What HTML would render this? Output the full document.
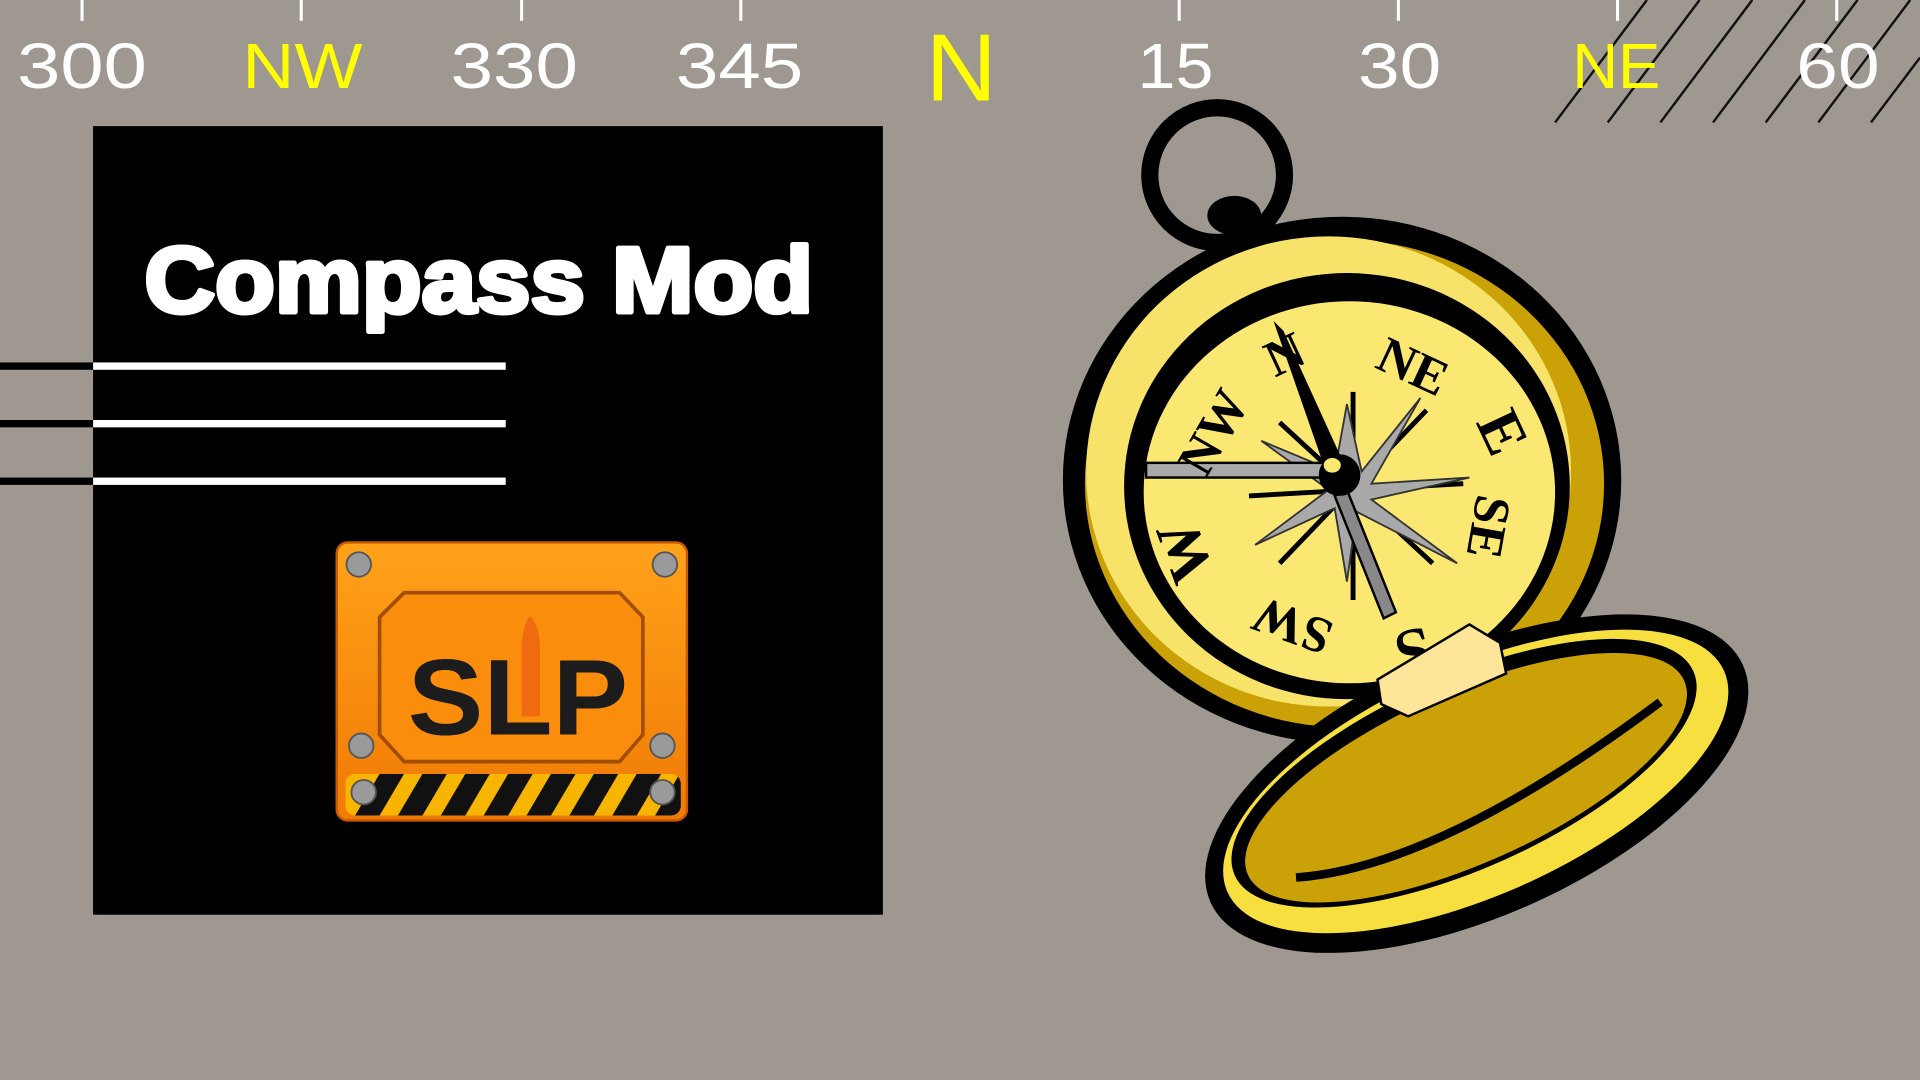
<!DOCTYPE html>
<html><head><meta charset="utf-8"><style>
html,body{margin:0;padding:0;width:1920px;height:1080px;overflow:hidden;background:#9f9891}
svg{display:block}
</style></head><body>
<svg width="1920" height="1080" viewBox="0 0 1568 882" preserveAspectRatio="none" xmlns="http://www.w3.org/2000/svg">
<rect width="1568" height="882" fill="#9f9891"/>
<g stroke="#111" stroke-width="2">
<line x1="1270" y1="100" x2="1345" y2="0"/><line x1="1313" y1="100" x2="1388" y2="0"/>
<line x1="1356" y1="100" x2="1431" y2="0"/><line x1="1399" y1="100" x2="1474" y2="0"/>
<line x1="1442" y1="100" x2="1517" y2="0"/><line x1="1485" y1="100" x2="1560" y2="0"/>
<line x1="1528" y1="100" x2="1568" y2="47"/>
</g>
<g stroke="#fff" stroke-width="2.5">
<line x1="67" y1="0" x2="67" y2="17"/><line x1="246" y1="0" x2="246" y2="17"/>
<line x1="426" y1="0" x2="426" y2="17"/><line x1="605" y1="0" x2="605" y2="17"/>
<line x1="963" y1="0" x2="963" y2="17"/><line x1="1142" y1="0" x2="1142" y2="17"/>
<line x1="1321" y1="0" x2="1321" y2="17"/><line x1="1500" y1="0" x2="1500" y2="17"/>
</g>
<g font-family="Liberation Sans Narrow, Liberation Sans, sans-serif" font-size="52" text-anchor="middle" fill="#fff">
<text x="67" y="72" textLength="106" lengthAdjust="spacingAndGlyphs">300</text>
<text x="247" y="72" fill="#ffff00" textLength="98" lengthAdjust="spacingAndGlyphs">NW</text>
<text x="420" y="72" textLength="104" lengthAdjust="spacingAndGlyphs">330</text>
<text x="604" y="72" textLength="104" lengthAdjust="spacingAndGlyphs">345</text>
<text x="785" y="82" fill="#ffff00" font-size="78" textLength="58" lengthAdjust="spacingAndGlyphs">N</text>
<text x="960" y="72" textLength="62" lengthAdjust="spacingAndGlyphs">15</text>
<text x="1143" y="72" textLength="68" lengthAdjust="spacingAndGlyphs">30</text>
<text x="1320" y="72" fill="#ffff00" textLength="72" lengthAdjust="spacingAndGlyphs">NE</text>
<text x="1501" y="72" textLength="68" lengthAdjust="spacingAndGlyphs">60</text>
</g>
<rect x="76" y="103" width="645" height="644" fill="#000"/>
<text x="391" y="255" font-family="Liberation Sans, sans-serif" font-weight="bold" font-size="76" fill="#fff" text-anchor="middle" textLength="546" lengthAdjust="spacingAndGlyphs" stroke="#fff" stroke-width="4" stroke-linejoin="round">Compass Mod</text>
<g fill="#fff"><rect x="76" y="296" width="337" height="6"/><rect x="76" y="343" width="337" height="6"/><rect x="76" y="390" width="337" height="6"/></g>
<g fill="#000"><rect x="0" y="296" width="76" height="6"/><rect x="0" y="343" width="76" height="6"/><rect x="0" y="390" width="76" height="6"/></g>
<defs>
<linearGradient id="pl" x1="0" y1="0" x2="0" y2="1"><stop offset="0" stop-color="#ffa21a"/><stop offset="1" stop-color="#f07a05"/></linearGradient>
<clipPath id="bar"><rect x="282" y="632" width="274" height="34" rx="8"/></clipPath>
</defs>
<rect x="275" y="443" width="286" height="227" rx="9" fill="url(#pl)" stroke="#c95a00" stroke-width="2"/>
<polygon points="330,484 506,484 525,504 525,600 506,622 330,622 310,600 310,504" fill="#fb8d0d" stroke="#a24d00" stroke-width="3"/>
<g clip-path="url(#bar)"><rect x="282" y="632" width="274" height="34" fill="#f7b500"/>
<g fill="#111"><polygon points="290,666 310,632 330,632 310,666"/><polygon points="325,666 345,632 365,632 345,666"/><polygon points="360,666 380,632 400,632 380,666"/><polygon points="395,666 415,632 435,632 415,666"/><polygon points="430,666 450,632 470,632 450,666"/><polygon points="465,666 485,632 505,632 485,666"/><polygon points="500,666 520,632 540,632 520,666"/><polygon points="535,666 555,632 575,632 555,666"/></g></g>
<text x="423" y="600" font-family="Liberation Sans, sans-serif" font-weight="bold" font-size="88" fill="#1c1c1c" text-anchor="middle" textLength="180" lengthAdjust="spacingAndGlyphs">SLP</text>
<path d="M433 503 Q441 512 441 530 L441 585 L426 585 L426 530 Q426 512 433 503Z" fill="#f06a10"/>
<g fill="#9a9a9a" stroke="#555" stroke-width="1.5"><circle cx="293" cy="461" r="10"/><circle cx="543" cy="461" r="10"/><circle cx="295" cy="609" r="10"/><circle cx="541" cy="609" r="10"/><circle cx="297" cy="647" r="10"/><circle cx="541" cy="647" r="10"/></g>
<g>
<circle cx="994" cy="143" r="55" fill="none" stroke="#000" stroke-width="14"/>
<ellipse cx="1008" cy="176" rx="22" ry="16" fill="#000"/>
<ellipse cx="1096" cy="392" rx="228" ry="215" fill="#000"/>
<ellipse cx="1098" cy="395" rx="212" ry="199" fill="#caa208"/>
<ellipse cx="1085" cy="385" rx="198" ry="192" fill="#f7e36a"/>
<ellipse cx="1100" cy="397" rx="182" ry="174" fill="#000"/>
<ellipse cx="1102" cy="402" rx="168" ry="156" fill="#fbe873"/>
<g stroke="#000" stroke-width="4">
<line x1="1105" y1="320" x2="1105" y2="490"/><line x1="1020" y1="405" x2="1195" y2="395"/>
<line x1="1045" y1="345" x2="1170" y2="460"/><line x1="1165" y1="335" x2="1045" y2="460"/>
</g>
<polygon points="1100,330 1112,385 1160,325 1120,395 1200,390 1120,408 1190,460 1108,418 1100,475 1090,415 1025,445 1085,400 1030,360 1090,385" fill="#a9a9a9" stroke="#333" stroke-width="1.5"/>
<polygon points="1100,400 1140,500 1130,505 1090,405" fill="#888" stroke="#000" stroke-width="2"/>
<polygon points="1040,262 1048,270 1105,395 1088,400" fill="#000"/>
<rect x="936" y="378" width="150" height="12" fill="#a9a9a9" stroke="#000" stroke-width="2"/>
<circle cx="1094" cy="388" r="17" fill="#000"/><ellipse cx="1088" cy="380" rx="7" ry="6" fill="#fbe873"/>
<g font-family="Liberation Serif, serif" font-weight="bold" fill="#000" font-size="42" text-anchor="middle">
<text transform="translate(1148,312) rotate(25)">NE</text>
<text transform="translate(1212,360) rotate(65)" font-size="50">E</text>
<text transform="translate(1202,428) rotate(100)">SE</text>
<text transform="translate(1150,515) rotate(165)" font-size="50">S</text>
<text transform="translate(1060,498) rotate(200)">SW</text>
<text transform="translate(983,445) rotate(-110)" font-size="50">W</text>
<text transform="translate(1003,360) rotate(-60)">NW</text>
<text transform="translate(1055,302) rotate(-25)">N</text>
</g>
<g transform="rotate(-24 1206 640)">
<ellipse cx="1206" cy="640" rx="238" ry="108" fill="#000"/>
<ellipse cx="1206" cy="638" rx="222" ry="93" fill="#f7df40"/>
<ellipse cx="1200" cy="628" rx="205" ry="78" fill="#000"/>
<ellipse cx="1200" cy="632" rx="195" ry="70" fill="#caa208"/>
<path d="M1040 650 Q1150 690 1370 640" fill="none" stroke="#000" stroke-width="7"/>
</g>
<path d="M1125 555 L1200 510 L1225 525 L1230 550 L1150 585 L1128 575 Z" fill="#ffe59a" stroke="#000" stroke-width="2"/>
</g>
</svg>
</body></html>
